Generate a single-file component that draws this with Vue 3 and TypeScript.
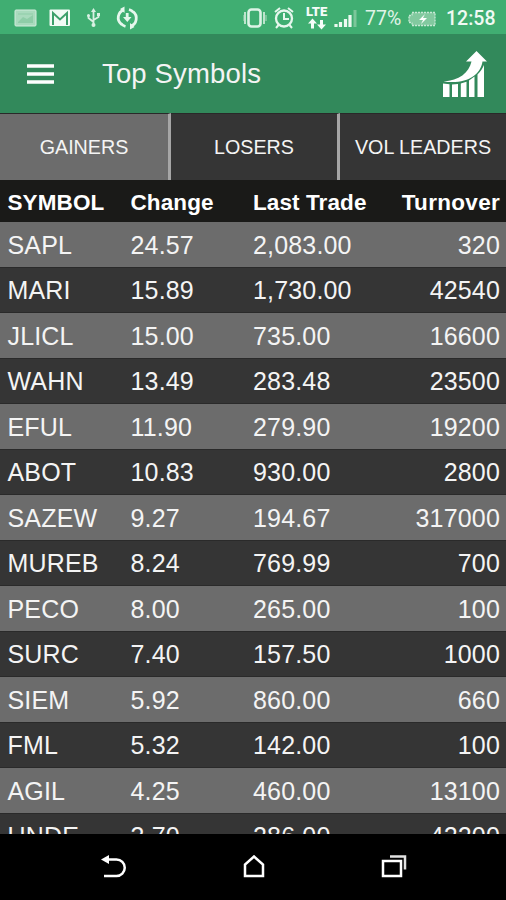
<script setup lang="ts">
interface Quote {
  symbol: string
  change: string
  lastTrade: string
  turnover: string
}

const tabs: string[] = ['GAINERS', 'LOSERS', 'VOL LEADERS']

const quotes: Quote[] = [
  { symbol: 'SAPL', change: '24.57', lastTrade: '2,083.00', turnover: '320' },
  { symbol: 'MARI', change: '15.89', lastTrade: '1,730.00', turnover: '42540' },
  { symbol: 'JLICL', change: '15.00', lastTrade: '735.00', turnover: '16600' },
  { symbol: 'WAHN', change: '13.49', lastTrade: '283.48', turnover: '23500' },
  { symbol: 'EFUL', change: '11.90', lastTrade: '279.90', turnover: '19200' },
  { symbol: 'ABOT', change: '10.83', lastTrade: '930.00', turnover: '2800' },
  { symbol: 'SAZEW', change: '9.27', lastTrade: '194.67', turnover: '317000' },
  { symbol: 'MUREB', change: '8.24', lastTrade: '769.99', turnover: '700' },
  { symbol: 'PECO', change: '8.00', lastTrade: '265.00', turnover: '100' },
  { symbol: 'SURC', change: '7.40', lastTrade: '157.50', turnover: '1000' },
  { symbol: 'SIEM', change: '5.92', lastTrade: '860.00', turnover: '660' },
  { symbol: 'FML', change: '5.32', lastTrade: '142.00', turnover: '100' },
  { symbol: 'AGIL', change: '4.25', lastTrade: '460.00', turnover: '13100' },
  { symbol: 'UNDE', change: '3.70', lastTrade: '286.00', turnover: '42200' },
]
</script>

<template>
  <div class="screen">
    <div class="status">
      <svg class="notifications" width="140" height="34" viewBox="0 0 140 34" fill="none">
        <rect x="15" y="10" width="21" height="16" rx="1" fill="#a9dabd" stroke="#d2ecdd" />
        <path d="M18 22l5-5 4 2 6-4v8H18z" fill="#8fcda8" />
        <path d="M18 14h15" stroke="#8fcda8" />
        <rect x="49.500" y="9.500" width="20.500" height="16.500" rx="1" fill="#f2fbf5" />
        <path d="M53 25V13l7 6.500 7-6.500v12" stroke="#3da06b" stroke-width="2" />
        <g stroke="#d9f1e3" stroke-width="1.800">
          <path d="M93.500 11v14M93.500 22l-5-4v-3M93.500 20l5-3v-3" />
          <path d="M93.500 8l2.500 4h-5z" fill="#d9f1e3" stroke="none" />
          <circle cx="93.500" cy="25" r="2" fill="#d9f1e3" stroke="none" />
          <circle cx="88.500" cy="15.500" r="1.500" fill="#d9f1e3" stroke="none" />
          <rect x="97" y="13" width="3" height="3" fill="#d9f1e3" stroke="none" />
        </g>
        <g stroke="#e6f7ed" stroke-width="2.800">
          <path d="M124 9.800a8.300 8.300 0 0 0-2.500 14.500M130.500 26.200a8.300 8.300 0 0 0 2.500-14.500" />
          <path d="M129 9.500a8.300 8.300 0 0 1 4.500 3" />
          <path d="M125.500 26.500a8.300 8.300 0 0 1-4.500-3" />
          <path d="M124.500 6.500v6.500l-4.500-4zM130 29.500V23l4.500 4z" fill="#e6f7ed" stroke="none" />
          <path d="M127.200 13v5" />
          <path d="M123 17h8.500l-4.200 5z" fill="#e6f7ed" stroke="none" />
        </g>
      </svg>
      <svg class="signals" width="116" height="34" viewBox="0 0 116 34" fill="none">
        <rect x="5.500" y="9.500" width="12" height="17" rx="3" stroke="#ddf3e6" stroke-width="2.600" />
        <path d="M2 12v12M21 12v12" stroke="#bde4cd" stroke-width="2" />
        <path d="M0 15v6M23 15v6" stroke="#8ccca6" stroke-width="1.500" />
        <circle cx="41" cy="18.500" r="8" stroke="#e6f7ed" stroke-width="2.300" />
        <path d="M41 13v6h5M32 12l5-4M50 12l-5-4M35.500 25l-2.500 3M46.500 25l2.500 3" stroke="#e6f7ed" stroke-width="2" />
        <path d="M69.500 18.500l4.500 5h-3v5h-3v-5h-3zM78.500 29.500l-4.500-5h3V20h3v4.500h3z" fill="#f5fcf8" />
        <path d="M93 24v3M97.500 22v5M102.500 19v8M107 15v12" stroke="#edf9f1" stroke-width="3.200" />
        <path d="M112 10v17" stroke="#7cc69a" stroke-width="3" />
      </svg>
      <span class="lte">LTE</span>
      <span class="percent">77%</span>
      <svg class="battery" width="28" height="16" viewBox="0 0 28 16" fill="none">
        <path d="M4 1.500h23v13H4v-3H1v-7h3z" fill="#82c99f" stroke="#c6e8d4" stroke-width="1.300" stroke-dasharray="2 1" />
        <path d="M17 3l-6 6h4l-2 4 6-6h-4z" fill="#fff" />
      </svg>
      <span class="clock">12:58</span>
    </div>

    <header class="appbar">
      <svg class="menu" width="27" height="20" viewBox="0 0 27 20">
        <path d="M0 2h27M0 10h27M0 18h27" stroke="#fff" stroke-width="3.500" />
      </svg>
      <h1>Top Symbols</h1>
      <svg class="growth" width="45" height="47" viewBox="0 0 45 47" fill="#fff">
        <path d="M34.500 0l10.500 10.500h-4.500C38.500 24 25 33.500 1.500 30.500 17 29.500 27 22 29.500 10.500H24z" />
        <path d="M1 32.500l6.500.8V46H1zM10 33.500l6-.5v13h-6zM18.800 32.500l5.700-1.800V46h-5.700zM27 29.500l5.500-4V46H27zM35.500 23.500c3-3 5-6 6.500-9.500V46h-6.500z" />
      </svg>
    </header>

    <nav class="tabs">
      <button v-for="(tab, index) in tabs" :key="tab" :class="['tab', { active: index === 0 }]">{{ tab }}</button>
    </nav>

    <div class="columns heading">
      <span>SYMBOL</span>
      <span>Change</span>
      <span>Last Trade</span>
      <span class="right">Turnover</span>
    </div>
    <main class="list">
      <div v-for="quote in quotes" :key="quote.symbol" class="columns row">
        <span>{{ quote.symbol }}</span>
        <span>{{ quote.change }}</span>
        <span>{{ quote.lastTrade }}</span>
        <span class="right">{{ quote.turnover }}</span>
      </div>
    </main>

    <footer class="navbar">
      <svg width="26" height="24" viewBox="0 0 26 24" fill="none">
        <path d="M6 4.500h9.500a8.250 8.250 0 0 1 0 16.500H3" stroke="#fff" stroke-width="2.500" />
        <path d="M0 4.500l8-4.500v9z" fill="#fff" />
      </svg>
      <svg width="22" height="24" viewBox="0 0 22 24" fill="none">
        <path d="M2 21V9.500l9-8 9 8V21z" stroke="#fff" stroke-width="2.500" />
      </svg>
      <svg width="26" height="24" viewBox="0 0 26 24" fill="none">
        <path d="M2 6h18v15H2z" stroke="#fff" stroke-width="2.500" />
        <path d="M9 1.500h15v13" stroke="#e2e2e2" stroke-width="2.500" />
      </svg>
    </footer>
  </div>
</template>

<style>
body {
  background: #000;
}
</style>

<style scoped>
.screen {
  width: 506px;
  height: 900px;
  display: flex;
  flex-direction: column;
  overflow: hidden;
  background: #000;
  color: #f4f4f4;
  font-family: "Liberation Sans", Arial, sans-serif;
}
.status {
  position: relative;
  flex: none;
  height: 34px;
  display: flex;
  align-items: center;
  background: #40ae72;
  font-family: Roboto, sans-serif;
}
.signals {
  margin-left: 103px;
}
.lte {
  position: absolute;
  left: 306px;
  top: 5px;
  font-size: 13px;
  line-height: 14px;
  font-weight: 900;
  color: #f5fcf8;
}
.percent {
  width: 37px;
  margin-left: 6px;
  padding-top: 3px;
  font-size: 19.500px;
  color: #e0f4e8;
}
.battery {
  margin: 3px 0 0 6px;
}
.clock {
  margin-left: 10px;
  padding-top: 3px;
  font-size: 19.500px;
  font-weight: 500;
  color: #f0faf4;
}
.appbar {
  flex: none;
  height: 79px;
  box-sizing: border-box;
  padding: 0 19px 0 26.500px;
  display: flex;
  align-items: center;
  background: #32895b;
}
h1 {
  flex: 1;
  margin: 0 0 0 48.500px;
  font-size: 27.500px;
  line-height: 32px;
  font-weight: 400;
  letter-spacing: 0.15px;
}
.growth {
  margin-top: 1px;
}
.tabs {
  flex: none;
  height: 67px;
  display: grid;
  grid-template-columns: 171px 169px 1fr;
}
.tab {
  margin: 0;
  padding: 0;
  border: 0;
  border-right: 3px solid #a6a6a6;
  border-top: 1px solid #292929;
  background: #353535;
  color: #f4f4f4;
  font-family: inherit;
  font-size: 19.700px;
}
.tab:last-child {
  border-right: 0;
}
.tab.active {
  background: #6c6c6c;
}
.columns {
  display: grid;
  grid-template-columns: 123px 122.500px 122.500px 1fr;
  align-items: center;
  padding: 0 6px 0 7.500px;
  box-sizing: border-box;
}
.right {
  text-align: right;
}
.heading {
  flex: none;
  height: 42px;
  padding-top: 4px;
  background: #1a1a18;
  color: #fff;
  font-size: 22.500px;
  font-weight: 700;
  letter-spacing: 0.1px;
}
.heading .right {
  letter-spacing: 0.3px;
}
.list {
  flex: none;
  height: 611.500px;
  overflow: hidden;
}
.row {
  height: 45.500px;
  padding-top: 2px;
  border-bottom: 1px solid #2a2a2a;
  background: #353535;
  font-size: 25px;
  letter-spacing: 0.17px;
}
.row:nth-child(odd) {
  background: #6c6c6c;
}
.navbar {
  flex: 1;
  display: flex;
  justify-content: space-between;
  align-items: center;
  padding: 0 99px 0 101px;
}
</style>
